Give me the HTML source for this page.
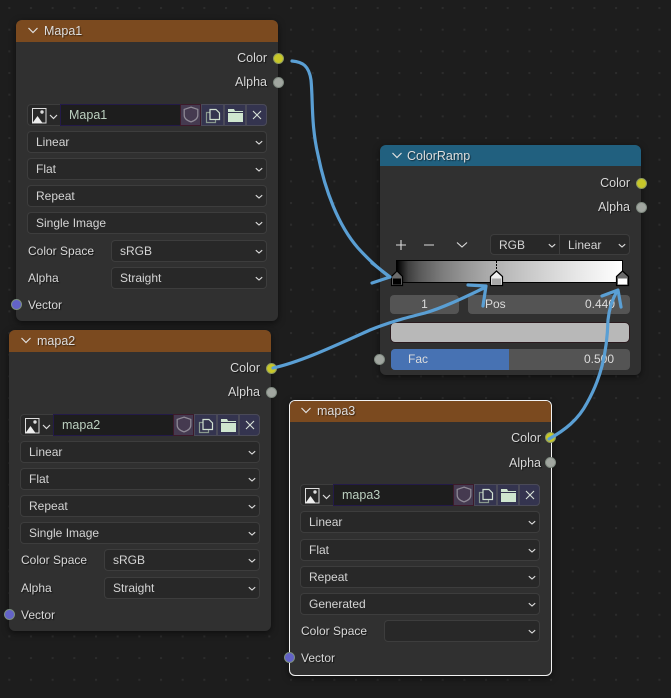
<!DOCTYPE html>
<html><head><meta charset="utf-8"><style>
html,body{margin:0;padding:0}
body{width:671px;height:698px;overflow:hidden;position:relative;background-color:#1d1d1d;
font:12px/1 "Liberation Sans",sans-serif;color:#e0e0e0}
.n{position:absolute;background:#303030;border-radius:6px;box-shadow:0 2px 7px rgba(0,0,0,.55)}
.n *{position:absolute;box-sizing:border-box}
.h{left:0;top:0;right:0;height:22px;background:#7b4a1f;border-radius:6px 6px 0 0}
.t{left:28px;top:5px;font-size:12.5px;color:#dedede;text-shadow:1px 1px 1px rgba(0,0,0,.5)}
.c{left:11px;top:7px;width:12px;height:8px}
.l{white-space:nowrap;color:#d8d8d8;text-shadow:1px 1px 1px rgba(0,0,0,.6);height:14px;line-height:14px}
.r{right:11px;text-align:right;font-size:12.5px}
.s{width:11px;height:11px;border-radius:50%;background:#a1a6a0;border:1px solid #7f8a80}
.y{background:#c7c729;border-color:#8e9a60}.v{background:#6363c7;border-color:#7d9080}
.d{left:11px;width:240px;height:21.5px;background:#282828;border:1px solid #3d3d3d;border-radius:4px;line-height:21px;padding-left:8px;color:#d4d4d4;white-space:nowrap}
.d.sm{left:95px;width:156px}
.d svg{right:3px;top:8px;width:8px;height:5.6px}
.img{left:11px;top:84px;width:240px;height:22px;background:#282828;border:1px solid #3d3d3d;border-radius:4px}
.nm{left:32px;top:-1px;width:120px;height:22px;background:#1d1d1d;border:1px solid #231a48;border-right:0;line-height:21px;padding-left:8px;color:#bcd0c0;font-size:12.5px}
.sh{left:152px;top:-1px;width:21px;height:22px;background:#453a50;border:1px solid #3d1a2a}
.b{top:-1px;height:22px;background:#34344f;border:1px solid #4a4a58}
.b1{left:173px;width:23px}.b2{left:196px;width:22px}.b3{left:218px;width:21px;border-radius:0 4px 4px 0}
svg{overflow:visible}
.sel{border:1.5px solid #f2f2f2;box-sizing:border-box}
</style></head><body>
<svg width="671" height="698" style="position:absolute;left:0;top:0">
<defs><pattern id="g" x="8.3" y="7" width="21.67" height="21.67" patternUnits="userSpaceOnUse"><rect width="2" height="2" fill="#2c2c2c"/></pattern></defs>
<rect width="671" height="698" fill="url(#g)"/></svg>

<!-- NODE 1 -->
<div class="n" style="left:16px;top:20px;width:262px;height:301px">
<div class="h"></div>
<svg class="c" viewBox="0 0 12 8"><path d="M1.500 1L6 5.500L10.500 1" fill="none" stroke="#e0e0e0" stroke-width="1.200"/></svg>
<div class="t">Mapa1</div>
<div class="l r" style="top:31px">Color</div><div class="s y" style="left:256.500px;top:32.500px"></div>
<div class="l r" style="top:55px">Alpha</div><div class="s" style="left:256.500px;top:56.500px"></div>
<div class="img">
<svg style="left:3px;top:2px;width:28px;height:18px" viewBox="0 0 28 18"><path d="M1.500 1.500H15V16H1.500Z" fill="none" stroke="#ddd"/><path d="M1.500 16L6.500 9L11.500 16Z" fill="#eee"/><circle cx="11" cy="5" r="1.700" fill="#ddd"/><path d="M19 8L22.500 11.500L26 8" fill="none" stroke="#ddd" stroke-width="1.200"/></svg>
<div class="nm">Mapa1</div>
<div class="sh"><svg style="left:2px;top:1px;width:16px;height:17px" viewBox="0 0 14 15"><path d="M7 1L13 3V8C13 11 10 13 7 14C4 13 1 11 1 8V3Z" fill="none" stroke="#8f8a96" stroke-width="1.100"/></svg></div>
<div class="b b1"><svg style="left:3px;top:3px;width:16px;height:16px" viewBox="0 0 16 16"><path d="M5 4.500H1.500V14.500H10.500V11.500" fill="none" stroke="#8a9a8e" stroke-width="1.200"/><path d="M5 1.500H11L14.500 5V11.500H5Z" fill="none" stroke="#d0e0d0" stroke-width="1.200"/></svg></div>
<div class="b b2"><svg style="left:3px;top:4px;width:15px;height:13px" viewBox="0 0 15 13"><path d="M0 0H6L7 2H15V13H0Z" fill="#cfe6cf"/><path d="M0 3.500H15" stroke="#34344f"/></svg></div>
<div class="b b3"><svg style="left:5px;top:5px;width:10px;height:10px" viewBox="0 0 10 10"><path d="M1 1L9 9M9 1L1 9" stroke="#d8e2d8" stroke-width="1.100"/></svg></div>
</div>
<div class="d" style="top:111px">Linear<svg viewBox="0 0 10 7"><path d="M1 1.500L5 5L9 1.500" fill="none" stroke="#ddd" stroke-width="1.400"/></svg></div>
<div class="d" style="top:138px">Flat<svg viewBox="0 0 10 7"><path d="M1 1.500L5 5L9 1.500" fill="none" stroke="#ddd" stroke-width="1.400"/></svg></div>
<div class="d" style="top:165px">Repeat<svg viewBox="0 0 10 7"><path d="M1 1.500L5 5L9 1.500" fill="none" stroke="#ddd" stroke-width="1.400"/></svg></div>
<div class="d" style="top:192px">Single Image<svg viewBox="0 0 10 7"><path d="M1 1.500L5 5L9 1.500" fill="none" stroke="#ddd" stroke-width="1.400"/></svg></div>
<div class="l" style="left:12px;top:224px">Color Space</div>
<div class="d sm" style="top:220px">sRGB<svg viewBox="0 0 10 7"><path d="M1 1.500L5 5L9 1.500" fill="none" stroke="#ddd" stroke-width="1.400"/></svg></div>
<div class="l" style="left:12px;top:251px">Alpha</div>
<div class="d sm" style="top:247px">Straight<svg viewBox="0 0 10 7"><path d="M1 1.500L5 5L9 1.500" fill="none" stroke="#ddd" stroke-width="1.400"/></svg></div>
<div class="l" style="left:12px;top:278px">Vector</div><div class="s v" style="left:-5.500px;top:279px"></div>
</div>

<!-- NODE 2 -->
<div class="n" style="left:9px;top:330px;width:262px;height:301px">
<div class="h"></div>
<svg class="c" viewBox="0 0 12 8"><path d="M1.500 1L6 5.500L10.500 1" fill="none" stroke="#e0e0e0" stroke-width="1.200"/></svg>
<div class="t">mapa2</div>
<div class="l r" style="top:31px">Color</div><div class="s y" style="left:256.500px;top:32.500px"></div>
<div class="l r" style="top:55px">Alpha</div><div class="s" style="left:256.500px;top:56.500px"></div>
<div class="img">
<svg style="left:3px;top:2px;width:28px;height:18px" viewBox="0 0 28 18"><path d="M1.500 1.500H15V16H1.500Z" fill="none" stroke="#ddd"/><path d="M1.500 16L6.500 9L11.500 16Z" fill="#eee"/><circle cx="11" cy="5" r="1.700" fill="#ddd"/><path d="M19 8L22.500 11.500L26 8" fill="none" stroke="#ddd" stroke-width="1.200"/></svg>
<div class="nm">mapa2</div>
<div class="sh"><svg style="left:2px;top:1px;width:16px;height:17px" viewBox="0 0 14 15"><path d="M7 1L13 3V8C13 11 10 13 7 14C4 13 1 11 1 8V3Z" fill="none" stroke="#8f8a96" stroke-width="1.100"/></svg></div>
<div class="b b1"><svg style="left:3px;top:3px;width:16px;height:16px" viewBox="0 0 16 16"><path d="M5 4.500H1.500V14.500H10.500V11.500" fill="none" stroke="#8a9a8e" stroke-width="1.200"/><path d="M5 1.500H11L14.500 5V11.500H5Z" fill="none" stroke="#d0e0d0" stroke-width="1.200"/></svg></div>
<div class="b b2"><svg style="left:3px;top:4px;width:15px;height:13px" viewBox="0 0 15 13"><path d="M0 0H6L7 2H15V13H0Z" fill="#cfe6cf"/><path d="M0 3.500H15" stroke="#34344f"/></svg></div>
<div class="b b3"><svg style="left:5px;top:5px;width:10px;height:10px" viewBox="0 0 10 10"><path d="M1 1L9 9M9 1L1 9" stroke="#d8e2d8" stroke-width="1.100"/></svg></div>
</div>
<div class="d" style="top:111px">Linear<svg viewBox="0 0 10 7"><path d="M1 1.500L5 5L9 1.500" fill="none" stroke="#ddd" stroke-width="1.400"/></svg></div>
<div class="d" style="top:138px">Flat<svg viewBox="0 0 10 7"><path d="M1 1.500L5 5L9 1.500" fill="none" stroke="#ddd" stroke-width="1.400"/></svg></div>
<div class="d" style="top:165px">Repeat<svg viewBox="0 0 10 7"><path d="M1 1.500L5 5L9 1.500" fill="none" stroke="#ddd" stroke-width="1.400"/></svg></div>
<div class="d" style="top:192px">Single Image<svg viewBox="0 0 10 7"><path d="M1 1.500L5 5L9 1.500" fill="none" stroke="#ddd" stroke-width="1.400"/></svg></div>
<div class="l" style="left:12px;top:223px">Color Space</div>
<div class="d sm" style="top:219px">sRGB<svg viewBox="0 0 10 7"><path d="M1 1.500L5 5L9 1.500" fill="none" stroke="#ddd" stroke-width="1.400"/></svg></div>
<div class="l" style="left:12px;top:251px">Alpha</div>
<div class="d sm" style="top:247px">Straight<svg viewBox="0 0 10 7"><path d="M1 1.500L5 5L9 1.500" fill="none" stroke="#ddd" stroke-width="1.400"/></svg></div>
<div class="l" style="left:12px;top:278px">Vector</div><div class="s v" style="left:-5.500px;top:279px"></div>
</div>

<!-- COLOR RAMP -->
<div class="n" style="left:380px;top:145px;width:261px;height:230px">
<div class="h" style="height:21px;background:#21607f"></div>
<svg class="c" viewBox="0 0 12 8"><path d="M1.500 1L6 5.500L10.500 1" fill="none" stroke="#e0e0e0" stroke-width="1.200"/></svg>
<div class="t" style="left:27px">ColorRamp</div>
<div class="l r" style="top:31px">Color</div><div class="s y" style="left:255.500px;top:32.500px"></div>
<div class="l r" style="top:55px">Alpha</div><div class="s" style="left:255.500px;top:56.500px"></div>
<svg style="left:15px;top:94px;width:80px;height:12px" viewBox="0 0 80 12"><path d="M6 1V11M1 6H11M29 6H39" stroke="#dcdcdc" stroke-width="1.100"/><path d="M62 3.500L67 8L72 3.500" fill="none" stroke="#dcdcdc" stroke-width="1.100"/></svg>
<div class="d" style="left:110px;top:89px;width:70px;height:21px;border-radius:4px 0 0 4px;padding-left:8px;line-height:20px">RGB<svg viewBox="0 0 10 7"><path d="M1 1.500L5 5L9 1.500" fill="none" stroke="#ddd" stroke-width="1.400"/></svg></div>
<div class="d" style="left:179px;top:89px;width:71px;height:21px;border-radius:0 4px 4px 0;padding-left:8px;line-height:20px">Linear<svg viewBox="0 0 10 7"><path d="M1 1.500L5 5L9 1.500" fill="none" stroke="#ddd" stroke-width="1.400"/></svg></div>
<div style="left:16px;top:115px;width:227px;height:23px;border:1px solid #000;background:linear-gradient(90deg,#000 0%,#3f3f3f 5%,#595959 10%,#7c7c7c 20%,#959595 30%,#aaa 40%,#bcbcbc 50%,#cbcbcb 60%,#d9d9d9 70%,#e7e7e7 80%,#f3f3f3 90%,#fff 100%)"></div>
<svg style="left:0;top:115px;width:261px;height:32px" viewBox="0 0 261 32">
<path d="M116.500 1V10" stroke="#000" stroke-dasharray="2 1"/>
<path d="M11.500 25.500V16.500L17 11L22.500 16.500V25.500Z" fill="#6a6a6a" stroke="#000" stroke-width="1.200"/><rect x="13" y="18.500" width="8" height="6" fill="#000"/>
<path d="M110.500 25.500V16.500L116.500 11L122.500 16.500V25.500Z" fill="#efefef" stroke="#000" stroke-width="1.200"/><rect x="112" y="18.500" width="9" height="6" fill="#aaa"/>
<path d="M236.500 25.500V16.500L242.500 11L248.500 16.500V25.500Z" fill="#6a6a6a" stroke="#000" stroke-width="1.200"/><rect x="238" y="18.500" width="9" height="6" fill="#fff"/>
</svg>
<div style="left:10px;top:150px;width:69px;height:19px;background:#545454;border-radius:4px;text-align:center;line-height:19px;color:#dcdcdc">1</div>
<div style="left:88px;top:150px;width:162px;height:19px;background:#545454;border-radius:4px;line-height:19px;color:#dcdcdc"><span style="left:17px;top:0">Pos</span><span style="right:15px;top:0">0.440</span></div>
<div style="left:10px;top:177px;width:240px;height:21px;background:#b8b8b8;border:1px solid #2a1a1e;border-radius:5px"></div>
<div style="left:11px;top:204px;width:239px;height:21px;background:#545454;border-radius:4px;overflow:hidden;line-height:21px;color:#dcdcdc"><div style="left:0;top:0;width:118px;height:21px;background:#4772b3"></div><span style="left:17px;top:0">Fac</span><span style="right:16px;top:0">0.500</span></div>
<div class="s" style="left:-6px;top:208.500px"></div>
</div>

<!-- NODE 3 -->
<div class="n sel" style="left:289px;top:400px;width:263px;height:276px">
<div class="h" style="left:0;top:0;right:0;height:21px;border-radius:5px 5px 0 0"></div>
<svg class="c" style="left:10px;top:6px" viewBox="0 0 12 8"><path d="M1.500 1L6 5.500L10.500 1" fill="none" stroke="#e0e0e0" stroke-width="1.200"/></svg>
<div class="t" style="left:27px;top:4px">mapa3</div>
<div class="l r" style="top:30px;right:10px">Color</div><div class="s y" style="left:255px;top:31px"></div>
<div class="l r" style="top:55px;right:10px">Alpha</div><div class="s" style="left:255px;top:56px"></div>
<div class="img" style="left:10px;top:83px">
<svg style="left:3px;top:2px;width:28px;height:18px" viewBox="0 0 28 18"><path d="M1.500 1.500H15V16H1.500Z" fill="none" stroke="#ddd"/><path d="M1.500 16L6.500 9L11.500 16Z" fill="#eee"/><circle cx="11" cy="5" r="1.700" fill="#ddd"/><path d="M19 8L22.500 11.500L26 8" fill="none" stroke="#ddd" stroke-width="1.200"/></svg>
<div class="nm">mapa3</div>
<div class="sh"><svg style="left:2px;top:1px;width:16px;height:17px" viewBox="0 0 14 15"><path d="M7 1L13 3V8C13 11 10 13 7 14C4 13 1 11 1 8V3Z" fill="none" stroke="#8f8a96" stroke-width="1.100"/></svg></div>
<div class="b b1"><svg style="left:3px;top:3px;width:16px;height:16px" viewBox="0 0 16 16"><path d="M5 4.500H1.500V14.500H10.500V11.500" fill="none" stroke="#8a9a8e" stroke-width="1.200"/><path d="M5 1.500H11L14.500 5V11.500H5Z" fill="none" stroke="#d0e0d0" stroke-width="1.200"/></svg></div>
<div class="b b2"><svg style="left:3px;top:4px;width:15px;height:13px" viewBox="0 0 15 13"><path d="M0 0H6L7 2H15V13H0Z" fill="#cfe6cf"/><path d="M0 3.500H15" stroke="#34344f"/></svg></div>
<div class="b b3"><svg style="left:5px;top:5px;width:10px;height:10px" viewBox="0 0 10 10"><path d="M1 1L9 9M9 1L1 9" stroke="#d8e2d8" stroke-width="1.100"/></svg></div>
</div>
<div class="d" style="left:10px;top:110px">Linear<svg viewBox="0 0 10 7"><path d="M1 1.500L5 5L9 1.500" fill="none" stroke="#ddd" stroke-width="1.400"/></svg></div>
<div class="d" style="left:10px;top:138px">Flat<svg viewBox="0 0 10 7"><path d="M1 1.500L5 5L9 1.500" fill="none" stroke="#ddd" stroke-width="1.400"/></svg></div>
<div class="d" style="left:10px;top:165px">Repeat<svg viewBox="0 0 10 7"><path d="M1 1.500L5 5L9 1.500" fill="none" stroke="#ddd" stroke-width="1.400"/></svg></div>
<div class="d" style="left:10px;top:192px">Generated<svg viewBox="0 0 10 7"><path d="M1 1.500L5 5L9 1.500" fill="none" stroke="#ddd" stroke-width="1.400"/></svg></div>
<div class="l" style="left:11px;top:223px">Color Space</div>
<div class="d" style="left:94px;width:156px;top:219px"><svg viewBox="0 0 10 7"><path d="M1 1.500L5 5L9 1.500" fill="none" stroke="#ddd" stroke-width="1.400"/></svg></div>
<div class="l" style="left:11px;top:250px">Vector</div><div class="s v" style="left:-6.500px;top:251px"></div>
</div>

<!-- Hand-drawn arrows -->
<svg width="671" height="698" style="position:absolute;left:0;top:0;pointer-events:none" fill="none" stroke="#5a9fd4" stroke-width="3.200" stroke-linecap="round" stroke-linejoin="round">
<path d="M292 61C303 62 309 66 311 80C313 100 311 125 318 155C325 190 338 225 358 248C368 259 380 270 390 277"/>
<path d="M372 263L390 277L372 283"/>
<path d="M273 368C300 362 330 348 370 330C390 322 405 318 425 313C445 307 465 297 484 288"/>
<path d="M468 285L486 286L483 306"/>
<path d="M549 439C565 430 578 420 587 403C600 380 607 355 608 320C609 310 612 300 617 291"/>
<path d="M602 296L618 290L621 307"/>
</svg>
</body></html>
